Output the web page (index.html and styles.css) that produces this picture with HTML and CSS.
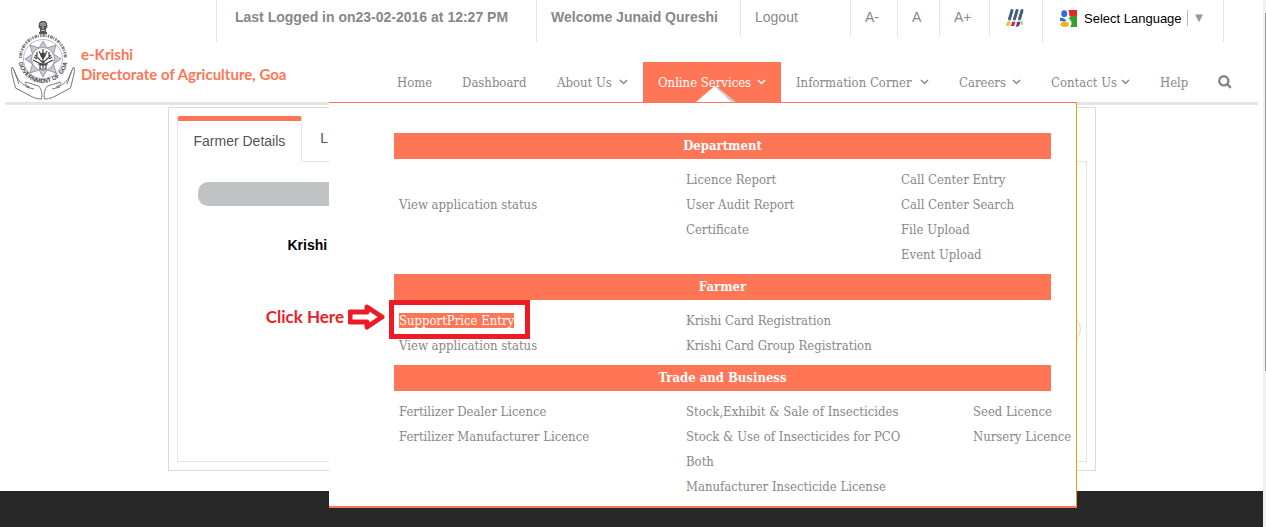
FILE: index.html
```html
<!DOCTYPE html>
<html lang="en">
<head>
    <meta charset="UTF-8">
    <meta name="viewport" content="width=device-width, initial-scale=1.0">
    <title>e-Krishi</title>
    <link rel="stylesheet" href="styles.css">
</head>
<body>
    <div class="page">
        <header class="header">
            <a class="brand" href="#">
                <svg class="emblem" viewBox="0 0 66 80" width="66" height="80" aria-hidden="true">
                    <defs>
                        <path id="ring-bottom" d="M8 37a25 26 0 0 0 50 0"/>
                    </defs>
                    <!-- lion capital -->
                    <g fill="#555">
                        <path d="M29 3l2-2h4l2 2 .5 4-1.500 2h-6l-1.500-2z"/>
                        <path d="M30 9h6v3h-6z"/>
                        <path d="M29 12h8v2h-8z"/>
                    </g>
                    <path d="M31 3v3M35 3v3M33 2v7M31 10.500h4" stroke="#ddd" stroke-width=".8"/>
                    <path d="M10.500 38a22.500 22.500 0 0 1 45 0" fill="none" stroke="#555" stroke-width="3" stroke-dasharray="1.500 1 2.500 .8 1 1.200" opacity=".75"/>
                    <circle cx="33" cy="39" r="19.500" fill="none" stroke="#aab" stroke-width=".8"/>
                    <!-- eight pointed star -->
                    <path d="M33 21l4 7 9-3-2.500 9 7.500 5-7.500 5 2.500 9-9-3-4 7-4-7-9 3 2.500-9-7.500-5 7.500-5-2.500-9 9 3z" fill="#c9c9d2" stroke="#889" stroke-width=".8"/>
                    <circle cx="33" cy="39" r="11.500" fill="#fff" stroke="#889" stroke-width=".8"/>
                    <g stroke="#444" stroke-width="1.200" fill="none">
                        <path d="M33 29v19M29 31l4 8 4-8M25 35l8 8 8-8M23 40l10 5 10-5M27 32v4M39 32v4M24 37l3 2M42 37l-3 2"/>
                        <path d="M30 45h6v4h-6zM28 44h10"/>
                        <circle cx="33" cy="35" r="2" fill="#444"/>
                    </g>
                    <!-- hands -->
                    <g fill="#fff" stroke="#777" stroke-width="1" stroke-linejoin="round">
                        <path d="M2.500 47c-1.500 1-1 4-.5 7l3.500 14 17 9c3 1.500 7 2 9 2 1-5 0-10-3-13l-13-4c-1 2 2 4 4 5-6-1-11-6-13-11z"/>
                        <path d="M63.500 47c1.500 1 1 4 .5 7l-3.500 14-17 9c-3 1.500-7 2-9 2-1-5 0-10 3-13l13-4c1 2-2 4-4 5 6-1 11-6 13-11z"/>
                        <path d="M4 50l5 14M62 50l-5 14M16 67l8 2M50 67l-8 2" fill="none"/>
                    </g>
                    <text class="emblem-text"><textPath href="#ring-bottom" startOffset="50%" text-anchor="middle">GOVERNMENT OF GOA</textPath></text>
                </svg>
                <span class="brand-name">e-Krishi<br>Directorate of Agriculture, Goa</span>
            </a>

            <div class="header-right">
                <ul class="topbar">
                    <li class="tall first"><strong>Last Logged in on23-02-2016 at 12:27 PM</strong></li>
                    <li class="tall"><strong>Welcome Junaid Qureshi</strong></li>
                    <li><a href="#">Logout</a></li>
                    <li><a href="#">A-</a></li>
                    <li><a href="#">A</a></li>
                    <li><a href="#">A+</a></li>
                    <li class="theme">
                        <a href="#" aria-label="Change theme">
                            <svg width="18" height="20" viewBox="0 0 18 20">
                                <g stroke="#46627a" stroke-width="3" stroke-linecap="round">
                                    <path d="M6 2.500L3.500 11"/>
                                    <path d="M11 2.500L8.500 11"/>
                                    <path d="M16 2.500L13.500 11"/>
                                </g>
                                <g stroke="#ccd3d8" stroke-width="2">
                                    <path d="M3.200 12l-.4 2M8.200 12l-.4 2M13.200 12l-.4 2"/>
                                </g>
                                <path d="M1 14h3.500L3 18H0z" fill="#f0c020"/>
                                <path d="M6 14h3.500L8 18H5z" fill="#e0203c"/>
                                <path d="M11 14h3.500L13 18l-3 1z" fill="#6a2fa0"/>
                                <path d="M14 14l3-2-1 3 2 1-3 1z" fill="#a8cf60"/>
                            </svg>
                        </a>
                    </li>
                    <li class="tall language">
                        <button type="button" class="language-button">
                            <svg width="17" height="17" viewBox="0 0 16 16" aria-hidden="true">
                                <path d="M8 0h8v6H9z" fill="#e8281f"/>
                                <path d="M8 8l3-2.500h5V16H9.500C12 13 11 10 8 8z" fill="#35a02c"/>
                                <ellipse cx="4" cy="3.500" rx="2.800" ry="3.200" fill="#2f6be0"/>
                                <path d="M0 7l4 1 2 2-2 1-4-1z" fill="#2f6be0"/>
                                <ellipse cx="4.500" cy="13.500" rx="4" ry="2.500" fill="#f5b40c"/>
                            </svg>
                            <span>Select Language</span>
                            <span class="arrow">▼</span>
                        </button>
                    </li>
                </ul>

                <nav class="nav">
                    <a href="#">Home</a>
                    <a href="#">Dashboard</a>
                    <a href="#">About Us <svg class="chevron" viewBox="0 0 9 6"><path d="M1 1l3.500 3.500L8 1"/></svg></a>
                    <a href="#" class="active">Online Services <svg class="chevron" viewBox="0 0 9 6"><path d="M1 1l3.500 3.500L8 1"/></svg>
                        <svg class="pointer" viewBox="0 0 40 16"><path d="M20 0l20 16h-6L18 2z" fill="#ccc"/><path d="M18.500 0L35 16H0z" fill="#fff"/></svg>
                    </a>
                    <a href="#">Information Corner <svg class="chevron" viewBox="0 0 9 6"><path d="M1 1l3.500 3.500L8 1"/></svg></a>
                    <a href="#">Careers <svg class="chevron" viewBox="0 0 9 6"><path d="M1 1l3.500 3.500L8 1"/></svg></a>
                    <a href="#">Contact Us <svg class="chevron" viewBox="0 0 9 6"><path d="M1 1l3.500 3.500L8 1"/></svg></a>
                    <a href="#">Help</a>
                    <a href="#" aria-label="Search">
                        <svg class="search" viewBox="0 0 14 14"><circle cx="5.800" cy="5.800" r="4.600"/><path d="M9.200 9.200l3.600 3.600"/></svg>
                    </a>

                    <div class="mega-menu">
                        <h2>Department</h2>
                        <div class="menu-row department">
                            <ul class="second-line">
                                <li><a href="#">View application status</a></li>
                            </ul>
                            <ul>
                                <li><a href="#">Licence Report</a></li>
                                <li><a href="#">User Audit Report</a></li>
                                <li><a href="#">Certificate</a></li>
                            </ul>
                            <ul>
                                <li><a href="#">Call Center Entry</a></li>
                                <li><a href="#">Call Center Search</a></li>
                                <li><a href="#">File Upload</a></li>
                                <li><a href="#">Event Upload</a></li>
                            </ul>
                        </div>

                        <h2>Farmer</h2>
                        <div class="menu-row">
                            <ul>
                                <li class="marked">
                                    <a href="#">SupportPrice Entry</a>
                                    <span class="marker"></span>
                                    <span class="callout">Click Here
                                        <svg width="38" height="26" viewBox="0 0 38 26"><path d="M2 8h17V3l15 10-15 10v-5H2z"/></svg>
                                    </span>
                                </li>
                                <li><a href="#">View application status</a></li>
                            </ul>
                            <ul>
                                <li><a href="#">Krishi Card Registration</a></li>
                                <li><a href="#">Krishi Card Group Registration</a></li>
                            </ul>
                        </div>

                        <h2>Trade and Business</h2>
                        <div class="menu-row">
                            <ul>
                                <li><a href="#">Fertilizer Dealer Licence</a></li>
                                <li><a href="#">Fertilizer Manufacturer Licence</a></li>
                            </ul>
                            <ul>
                                <li><a href="#">Stock,Exhibit &amp; Sale of Insecticides</a></li>
                                <li><a href="#">Stock &amp; Use of Insecticides for PCO</a></li>
                                <li><a href="#">Both</a></li>
                                <li><a href="#">Manufacturer Insecticide License</a></li>
                            </ul>
                            <ul>
                                <li><a href="#">Seed Licence</a></li>
                                <li><a href="#">Nursery Licence</a></li>
                            </ul>
                        </div>
                    </div>
                </nav>
            </div>
        </header>

        <main class="content">
            <div class="tabs">
                <a href="#" class="tab current">Farmer Details</a>
                <a href="#" class="tab">L</a>
            </div>
            <section class="panel">
                <div class="bar"></div>
                <p class="field-name">Krishi</p>
                <div class="round"></div>
            </section>
        </main>

        <footer class="footer"></footer>
    </div>
    <div class="scroll-track"><div class="scroll-thumb"></div></div>
</body>
</html>
```
FILE: styles.css
```css
* {
    margin: 0;
    padding: 0;
    box-sizing: border-box;
}

body {
    display: grid;
    grid-template-columns: minmax(0, 1fr) 3px;
    min-height: 100vh;
    background: #fff;
    color: #888;
    font-family: "Liberation Sans", Arial, sans-serif;
    font-size: 14px;
}

a {
    color: inherit;
    text-decoration: none;
}

ul {
    list-style: none;
}

.page {
    display: flex;
    flex-direction: column;
}

/* Header */
.header {
    display: flex;
    justify-content: space-between;
    margin: 0 5px;
    border-bottom: 3px solid #e5e5e5;
}

/* the name runs on below the top bar */
.brand {
    display: flex;
    flex: 1;
    gap: 5px;
    min-width: 0;
    padding: 20px 0 2px 5px;
    color: #ff7657;
}

.brand-name {
    padding-top: 24px;
    font-family: Lato, sans-serif;
    font-size: 15px;
    font-weight: bold;
    line-height: 20px;
    white-space: nowrap;
}

.emblem {
    flex: none;
}

.emblem-text {
    font-family: "Liberation Sans", Arial, sans-serif;
    font-size: 6px;
    font-weight: bold;
    fill: #444;
}

.header-right {
    display: flex;
    flex: none;
    flex-direction: column;
    align-items: flex-end;
    justify-content: space-between;
}

.topbar {
    display: grid;
    grid-template-columns: 320px 204px 110px 47px 42px 50px 53px 182px;
    align-items: start;
    margin-right: 34px;
}

.topbar li {
    height: 37px;
    padding-left: 14px;
    border-left: 1px solid #e5e5e5;
    line-height: 34px;
    white-space: nowrap;
}

.topbar .tall {
    height: 42px;
}

.topbar .first {
    padding-left: 18px;
}

.topbar .theme {
    padding: 8px 0 0 16px;
    line-height: 0;
}

.topbar .language {
    padding-left: 17px;
    border-right: 1px solid #e5e5e5;
}

.language-button {
    display: flex;
    align-items: center;
    height: 36px;
    border: none;
    background: none;
    color: #000;
    font-family: inherit;
    font-size: 13px;
    cursor: pointer;
}

.language-button svg {
    margin-right: 7px;
}

.arrow {
    margin-left: 5px;
    padding-left: 5px;
    border-left: 1px solid #bbb;
    color: #999;
    line-height: 16px;
}

/* Main navigation */
.nav {
    position: relative;
    display: grid;
    grid-template-columns: 65px 95px 101px 138px 163px 92px 109px 58px 44px;
    margin-right: 11px;
    font-family: "DejaVu Serif Condensed", "DejaVu Serif", serif;
    font-size: 13px;
}

.nav > a {
    position: relative;
    display: flex;
    align-items: center;
    justify-content: space-between;
    height: 40px;
    padding: 0 15px;
    white-space: nowrap;
}

.nav > .active {
    background: #ff7657;
    color: #fff;
}

.chevron {
    width: 9px;
    height: 6px;
    fill: none;
    stroke: currentColor;
    stroke-width: 1.5;
}

.search {
    width: 14px;
    height: 14px;
    fill: none;
    stroke: #888;
    stroke-width: 2.4;
}

.pointer {
    position: absolute;
    bottom: 0;
    left: 53px;
    width: 40px;
    height: 16px;
}

/* Drop-down of the active item */
.mega-menu {
    position: absolute;
    top: 100%;
    right: 170px;
    z-index: 5;
    width: 748px;
    padding: 30px 0 0 65px;
    border-top: 1px solid #ff7657;
    border-right: 1px solid #f39c12;
    border-bottom: 2px solid #ff7657;
    background: #fff;
}

.mega-menu h2 {
    margin-right: 25px;
    background: #ff7657;
    color: #fff;
    font-size: 13px;
    line-height: 26px;
    text-align: center;
}

.menu-row {
    display: grid;
    grid-template-columns: 287px 287px 1fr;
    padding: 8px 0 7px;
}

.department {
    grid-template-columns: 287px 215px 1fr;
}

.menu-row li {
    padding-left: 5px;
    line-height: 25px;
    white-space: nowrap;
}

.second-line {
    padding-top: 25px;
}

.marked {
    position: relative;
}

.marked a {
    background: #ff7657;
    color: #fff;
}

.marker {
    position: absolute;
    top: -8px;
    left: -5px;
    width: 141px;
    height: 39px;
    border: 5px solid #ed1c24;
}

.callout {
    position: absolute;
    top: -4px;
    right: calc(100% + 8px);
    display: flex;
    align-items: center;
    gap: 4px;
    color: #ed1c24;
    font-family: Lato, sans-serif;
    font-size: 17px;
    font-weight: bold;
    line-height: 26px;
}

.callout svg {
    fill: #fff;
    stroke: #ed1c24;
    stroke-width: 5;
    stroke-linejoin: round;
}

/* Page content */
.content {
    width: 100%;
    max-width: 928px;
    margin: 2px auto 20px;
    padding: 8px;
    border: 1px solid #ddd;
}

.tabs {
    display: flex;
}

.tab {
    padding: 9px 18px;
    color: #555;
    line-height: 27px;
}

.tab.current {
    position: relative;
    margin-bottom: -1px;
    padding: 7px 16px;
    border: 1px solid #e5e5e5;
    border-top: 5px solid #ff7657;
    border-bottom: none;
    border-radius: 3px 3px 0 0;
    background: #fff;
}

.panel {
    padding: 20px 5px 118px 20px;
    border: 1px solid #e5e5e5;
}

.bar {
    height: 24px;
    margin-right: 15px;
    border-radius: 10px;
    background: #bfc3c4;
}

.field-name {
    margin: 30px 0 61px 90px;
    color: #000;
    font-weight: bold;
    line-height: 18px;
}

.round {
    width: 28px;
    height: 28px;
    margin-left: auto;
    border: 1px solid #ddd;
    border-radius: 50%;
}

.footer {
    flex: 1;
    background: #272727;
}

/* Scroll bar at the window edge */
.scroll-track {
    padding: 13px 0 0 2px;
    background: #f1f1f1;
}

.scroll-thumb {
    height: 358px;
    background: #999;
}
```
